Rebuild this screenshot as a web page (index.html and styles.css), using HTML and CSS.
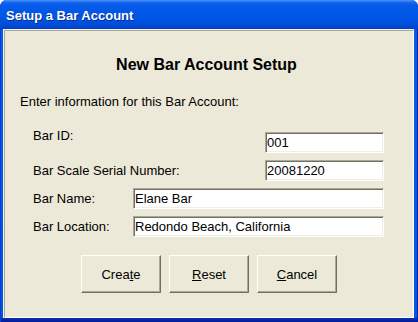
FILE: index.html
```html
<!DOCTYPE html>
<html lang="en">
<head>
    <meta charset="UTF-8">
    <meta name="viewport" content="width=device-width, initial-scale=1.0">
    <title>Setup a Bar Account</title>
    <link rel="stylesheet" href="styles.css">
</head>
<body>
<div class="window">
    <div class="titlebar">Setup a Bar Account</div>
    <div class="client">
        <div class="panel">
            <h1>New Bar Account Setup</h1>
            <p class="intro">Enter information for this Bar Account:</p>
            <div class="form">
                <div class="row short">
                    <label class="top-label">Bar ID:</label>
                    <input type="text" value="001">
                </div>
                <div class="row short">
                    <label>Bar Scale Serial Number:</label>
                    <input type="text" value="20081220">
                </div>
                <div class="row">
                    <label>Bar Name:</label>
                    <input type="text" value="Elane Bar">
                </div>
                <div class="row">
                    <label>Bar Location:</label>
                    <input type="text" value="Redondo Beach, California">
                </div>
            </div>
            <div class="buttons">
                <button>Crea<u>t</u>e</button>
                <button><u>R</u>eset</button>
                <button><u>C</u>ancel</button>
            </div>
        </div>
    </div>
</div>
</body>
</html>
```

FILE: styles.css
```css
body {
    margin: 0;
    padding: 0;
    background-color: white;
    font-family: "Liberation Sans", Arial, sans-serif;
    font-size: 13px;
    color: black;
}

.window {
    width: 418px;
    height: 322px;
    box-sizing: border-box;
    padding: 0 4px 4px 3px;
    display: flex;
    flex-direction: column;
    background: linear-gradient(to bottom, #0a5ae8 0%, #0655e2 calc(100% - 4px), #0a2fb8 calc(100% - 4px), #001b94 100%);
    border-radius: 7px 7px 0 0;
    box-shadow: inset 1px 0 #0a3fcf, inset -1px 0 #0024a8;
}

.titlebar {
    height: 29px;
    box-sizing: border-box;
    margin: 0 -4px 0 -3px;
    padding: 8px 0 0 6px;
    border-radius: 7px 7px 0 0;
    background: linear-gradient(to bottom, #4a98ff 0px, #1c6cf2 2px, #0a5ce9 4px, #0058e8 12px, #0054e3 20px, #004cd8 25px, #0040c6 29px);
    color: white;
    font-weight: bold;
    font-size: 13px;
    line-height: 15px;
    text-shadow: 1px 1px #0a2a8c;
}

.client {
    flex: 1;
    display: flex;
    border-top: 1px solid #f4f2ea;
    border-left: 1px solid #f4f2ea;
}

.panel {
    flex: 1;
    background-color: #ece9d8;
    border: 1px solid;
    border-color: #aca899 #fff #fff #aca899;
}

h1 {
    margin: 25px 0 0;
    padding-right: 5px;
    font-size: 16px;
    line-height: 18px;
    text-align: center;
}

.intro {
    margin: 20px 0 0;
    padding-left: 15px;
    line-height: 15px;
}

.form {
    margin-top: 23px;
    padding: 0 29px 0 28px;
    display: flex;
    flex-direction: column;
    gap: 7px;
}

.row {
    display: flex;
    align-items: center;
    height: 21px;
}

.row label {
    flex: 0 0 100px;
    line-height: 15px;
}

.row input {
    flex: 1;
    min-width: 0;
    height: 21px;
    box-sizing: border-box;
    margin: 0;
    padding: 0 1px;
    border: 1px solid;
    border-color: #aca899 #fff #fff #aca899;
    box-shadow: inset 1px 1px #716f64, inset -1px -1px #f1efe2;
    background-color: white;
    font-family: "Liberation Sans", Arial, sans-serif;
    font-size: 13px;
    color: black;
    outline: none;
}

.row.short label {
    flex: 1;
}

.row.short input {
    flex: 0 0 119px;
}

.top-label {
    align-self: flex-start;
    margin-top: -4px;
}

.buttons {
    margin-top: 18px;
    display: flex;
    justify-content: center;
    gap: 8px;
}

button {
    width: 80px;
    height: 38px;
    margin: 0;
    padding: 0;
    background-color: #ece9d8;
    border: 1px solid;
    border-color: #fff #716f64 #716f64 #fff;
    box-shadow: inset -1px -1px #aca899;
    font-family: "Liberation Sans", Arial, sans-serif;
    font-size: 13px;
    color: black;
}
```
